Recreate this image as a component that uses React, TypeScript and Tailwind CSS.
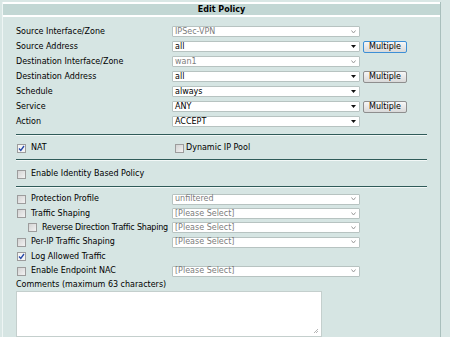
import React from "react";

type SelProps = { value: string; disabled?: boolean; muted?: boolean };

function FakeSelect({ value, disabled, muted }: SelProps) {
  const gray = disabled || muted;
  return (
    <div className="flex h-[11px] w-[188px] items-center justify-between rounded-[1px] border border-[#b7c3c1] bg-white pl-[2px] pr-[3px]">
      <span className={gray ? "text-[#7c7c7c]" : "text-black"}>{value}</span>
      {gray ? (
        <svg width="5" height="4" viewBox="0 0 5 4">
          <path d="M0.5 0.5 L2.5 3 L4.5 0.5" fill="none" stroke="#9a9a9a" strokeWidth="1" />
        </svg>
      ) : (
        <svg width="5" height="3" viewBox="0 0 5 3">
          <path d="M0 0 H5 L2.5 3 Z" fill="#111" />
        </svg>
      )}
    </div>
  );
}

function MultipleBtn({ focused }: { focused?: boolean }) {
  return (
    <button
      className={`ml-[3px] flex h-[12px] w-[44px] items-center justify-center rounded-[2px] border bg-gradient-to-b from-[#f7f7f7] to-[#d9d9d9] text-black ${
        focused ? "border-[#3d8fd6]" : "border-[#8e8e8e]"
      }`}
    >
      Multiple
    </button>
  );
}

function Check({ checked }: { checked?: boolean }) {
  return (
    <span
      className={`flex h-[9px] w-[9px] shrink-0 items-center justify-center border border-[#9c9c9c] ${
        checked ? "bg-[#f4f4f4]" : "bg-gradient-to-br from-[#d4d4d4] to-[#f2f2f2]"
      }`}
    >
      {checked && (
        <svg width="7" height="7" viewBox="0 0 7 7">
          <path d="M1 3.5 L2.8 5.5 L6 1" fill="none" stroke="#2448a8" strokeWidth="1.3" />
        </svg>
      )}
    </span>
  );
}

function Separator() {
  return (
    <div className="border-t border-b border-t-[#2f5b59] border-b-[#f2f8f7]" />
  );
}

const topRows: { label: string; value: string; disabled?: boolean; multi?: "focus" | "plain" }[] = [
  { label: "Source Interface/Zone", value: "IPSec-VPN", disabled: true },
  { label: "Source Address", value: "all", multi: "focus" },
  { label: "Destination Interface/Zone", value: "wan1", disabled: true },
  { label: "Destination Address", value: "all", multi: "plain" },
  { label: "Schedule", value: "always" },
  { label: "Service", value: "ANY", multi: "plain" },
  { label: "Action", value: "ACCEPT" },
];

const optRows: { label: string; checked?: boolean; indent?: boolean; select?: string }[] = [
  { label: "Protection Profile", select: "unfiltered" },
  { label: "Traffic Shaping", select: "[Please Select]" },
  { label: "Reverse Direction Traffic Shaping", indent: true, select: "[Please Select]" },
  { label: "Per-IP Traffic Shaping", select: "[Please Select]" },
  { label: "Log Allowed Traffic", checked: true },
  { label: "Enable Endpoint NAC", select: "[Please Select]" },
];

export default function App() {
  return (
    <div className="h-[337px] w-[450px] overflow-hidden bg-[#d9e7e5] pl-[2px] pt-[2px] font-['DejaVu_Sans',sans-serif] text-[8px] leading-none text-black">
      <div className="h-[400px] w-[439px] border-l border-r border-l-[#eef5f4] border-r-[#a9bfbc] bg-[#d6e5e3]">
        {/* Header */}
        <div className="flex h-[15px] items-center justify-center border-t-2 border-b-2 border-white bg-[#c2d7d4] font-bold">
          Edit Policy
        </div>

        <div className="pl-[13px] pr-[13px] pt-[7px]">
          {topRows.map((r) => (
            <div key={r.label} className="flex h-[15px] items-center">
              <div className="w-[156px]">{r.label}</div>
              <FakeSelect value={r.value} disabled={r.disabled} />
              {r.multi && <MultipleBtn focused={r.multi === "focus"} />}
            </div>
          ))}

          <div className="mt-[5px]">
            <Separator />
          </div>

          <div className="flex h-[23px] items-center pl-[1px] pt-[1px]">
            <div className="flex w-[158px] items-center gap-[5px]">
              <Check checked />
              <span>NAT</span>
            </div>
            <div className="flex items-center gap-[1px]">
              <Check />
              <span className="ml-[1px]">Dynamic IP Pool</span>
            </div>
          </div>

          <Separator />

          <div className="flex h-[25px] items-center gap-[5px] pl-[1px] pt-[1px]">
            <Check />
            <span>Enable Identity Based Policy</span>
          </div>

          <Separator />

          <div className="pt-[4px]">
            {optRows.map((r) => (
              <div key={r.label} className="flex h-[14.4px] items-center">
                <div className={`flex w-[156px] items-center gap-[5px] ${r.indent ? "pl-[12px]" : "pl-[1px]"}`}>
                  <Check checked={r.checked} />
                  <span className={`whitespace-nowrap ${r.indent ? "tracking-[-0.2px]" : ""}`}>{r.label}</span>
                </div>
                {r.select && <FakeSelect value={r.select} muted />}
              </div>
            ))}
            <div className="flex h-[13px] items-center">Comments (maximum 63 characters)</div>
          </div>

          <div className="relative h-[46px] w-[306px] border border-[#c4cfcd] bg-white">
            <svg className="absolute bottom-[2px] right-[2px]" width="6" height="6" viewBox="0 0 6 6">
              <path d="M5 1 L1 5 M5 3 L3 5" stroke="#b5b5b5" strokeWidth="1" />
            </svg>
          </div>
        </div>
      </div>
    </div>
  );
}
